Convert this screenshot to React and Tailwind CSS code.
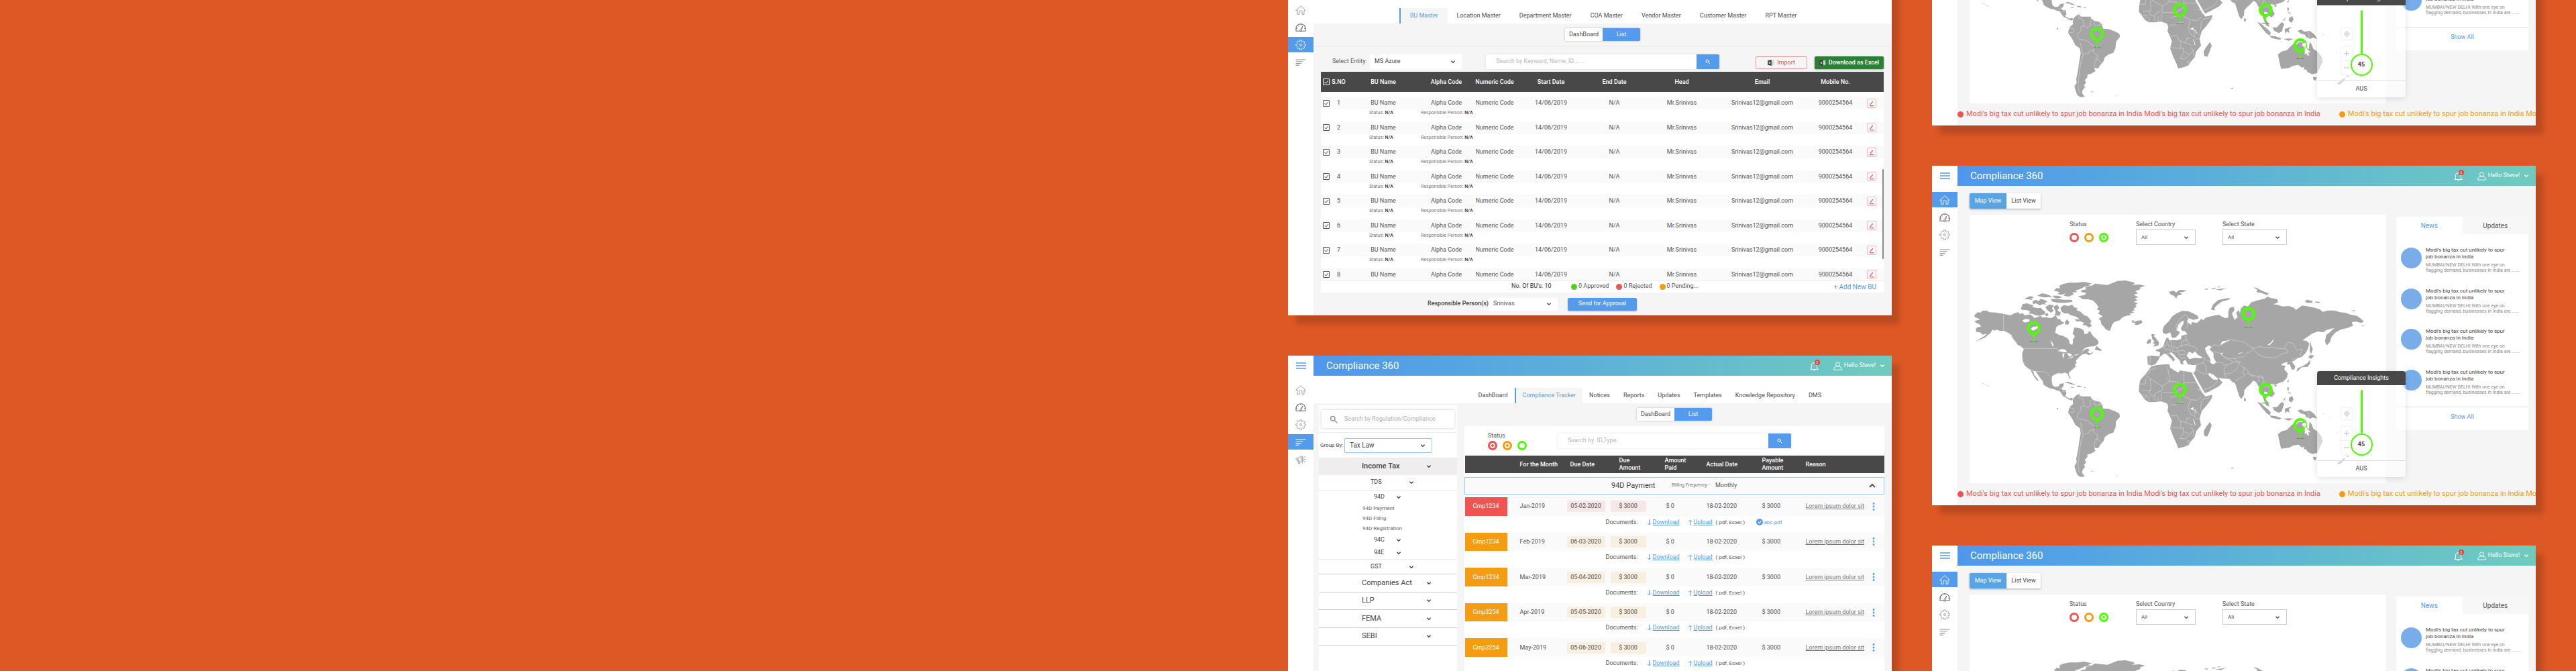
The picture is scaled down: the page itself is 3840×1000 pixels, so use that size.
import React, { useId } from "react";

/* ---------- icons ---------- */

function HomeIcon() {
  return (
    <svg viewBox="0 0 24 24" className="size-4" fill="none" stroke="currentColor" strokeWidth="1.3" strokeLinejoin="round" strokeLinecap="round" aria-hidden="true">
      <path d="M1.5 12.500 12 2.500 22.500 12.500h-3v9h-4.500v-7q0-1-1-1h-4q-1 0-1 1v7H4.500v-9z" />
    </svg>
  );
}

function GaugeIcon() {
  return (
    <svg viewBox="0 0 24 24" className="size-4" fill="none" stroke="currentColor" strokeWidth="1.6" strokeLinejoin="round" strokeLinecap="round" aria-hidden="true">
      <path d="M1.500 20v-5.500a10.500 10.500 0 0 1 21 0V20z" />
      <path d="M10 18.500a2 2 0 1 0 3.500-.5L16 9.500zM12 4.500v2M5 7.500l1.500 1.500M2 14h2M22 14h-2" strokeWidth="1.200" />
    </svg>
  );
}

function GearIcon() {
  return (
    <svg viewBox="0 0 24 24" className="size-4" fill="none" stroke="currentColor" strokeWidth="1.200" strokeLinejoin="round" aria-hidden="true">
      <path d="M9.700 4.500 10 1.500h4l.3 3 1.800.8 2.400-1.900 2.500 2.500-1.900 2.400.8 1.800 3 .3v3.200l-3 .3-.8 1.900 1.900 2.300-2.500 2.600-2.400-1.900-1.800.8-.3 3h-4l-.3-3-1.800-.8-2.400 1.900L3 18.100l1.900-2.300-.8-1.900-3-.3v-3.200l3-.3.8-1.800L3 5.900l2.500-2.500 2.400 1.900z" />
      <circle cx="12" cy="12" r="2.300" />
    </svg>
  );
}

function SortIcon() {
  return (
    <svg viewBox="0 0 24 24" className="size-4" fill="none" stroke="currentColor" strokeWidth="1.700" strokeLinecap="round" aria-hidden="true">
      <path d="M1.500 6h21M1.500 10.200h15M1.500 14.400h11M1.500 18.600h6" />
    </svg>
  );
}

function MegaphoneIcon() {
  return (
    <svg viewBox="0 0 24 24" className="size-4" fill="none" stroke="currentColor" strokeWidth="1.300" strokeLinecap="round" strokeLinejoin="round" aria-hidden="true">
      <path d="M5 8.500H3a1.500 1.500 0 0 0-1.500 1.500v2A1.500 1.500 0 0 0 3 13.500h3zM6 8.500l7-4v14l-7-4M5.500 14l1.500 7h3l-1.500-6" />
      <path d="M15.500 4v16M17 9l5-4M17.500 11.500H23M17 14l5 4" />
    </svg>
  );
}

function SearchIcon({ className }) {
  return (
    <svg viewBox="0 0 24 24" className={className} fill="none" stroke="currentColor" strokeWidth="3" strokeLinecap="round" aria-hidden="true">
      <circle cx="9.500" cy="9.500" r="6.500" />
      <path d="m15 15 7 7" />
    </svg>
  );
}

function Chevron({ className = "size-2" }) {
  return (
    <svg viewBox="0 0 12 12" className={className} fill="none" stroke="currentColor" strokeWidth="2" aria-hidden="true">
      <path d="m2 4 4 4 4-4" />
    </svg>
  );
}

function Arrow({ up }) {
  return (
    <svg viewBox="0 0 8 10" className="mr-[2px] h-[9px] w-[7px]" fill="none" stroke="currentColor" strokeWidth="1.100" aria-hidden="true">
      {up ? <path d="M4 10V1M1 4l3-3 3 3" /> : <path d="M4 0v9M1 6l3 3 3-3" />}
    </svg>
  );
}

function ExcelIcon({ className }) {
  return (
    <svg viewBox="0 0 24 22" className={className} aria-hidden="true">
      <path d="M13 3h9v16h-9z" fill="#fff" stroke="#999" />
      <path d="M14 7h8M14 11h8M14 15h8M18 4v15" stroke="#999" strokeWidth="1" />
      <path d="M0 3 14 0v22L0 19z" fill="#3d3d3d" />
      <path d="m4 7 6 8M10 7l-6 8" stroke="#fff" strokeWidth="2" />
    </svg>
  );
}

function PencilIcon() {
  return (
    <svg viewBox="0 0 12 12" className="size-[10px]" aria-hidden="true">
      <path d="M2 10.500h8" stroke="#f05451" strokeWidth="1.400" />
      <path d="M3.200 8.200 8.300 2.500" stroke="#f05451" strokeWidth="1.600" />
    </svg>
  );
}

/* ---------- frame ---------- */

const NAV = [
  ["home", "Home", HomeIcon],
  ["gauge", "Performance", GaugeIcon],
  ["gear", "Settings", GearIcon],
  ["sort", "Tracker", SortIcon],
  ["news", "Announcements", MegaphoneIcon],
];

function Sidebar({ active, count }) {
  return (
    <nav className="w-[38px] shrink-0 bg-white" aria-label="Main">
      <button type="button" aria-label="Menu" className="flex h-[30px] w-full items-center justify-center text-[#549bed]">
        <svg viewBox="0 0 15 10" className="h-[10px] w-[15px]" stroke="currentColor" strokeWidth="1.500" aria-hidden="true">
          <path d="M0 1h15M0 5h15M0 9h15" />
        </svg>
      </button>
      <ul className="mt-[9px] flex flex-col gap-[3px]">
        {NAV.slice(0, count).map(([id, label, Icon]) => (
          <li key={id}>
            <a
              href="#"
              aria-label={label}
              className={
                id === active
                  ? "flex h-[23px] items-center justify-center bg-[#549bed] text-white"
                  : id === "gauge"
                    ? "flex h-[23px] items-center justify-center text-[#666]"
                    : "flex h-[23px] items-center justify-center text-[#929292]"
              }
            >
              <Icon />
            </a>
          </li>
        ))}
      </ul>
    </nav>
  );
}

function Screen({ active, count = 4, children }) {
  return (
    <section className="flex h-[506px] shrink-0 bg-[#f5f5f5] shadow-[11px_13px_8px_rgba(0,0,0,0.16)]">
      <Sidebar active={active} count={count} />
      <div className="flex min-w-0 flex-1 flex-col">
        <header className="flex h-[30px] shrink-0 items-center bg-linear-to-r from-[#4f97ec] to-[#70cbbd] pr-[10px] pl-[19px] text-white">
          <h1 className="flex-1 text-[15px]">Compliance 360</h1>
          <button type="button" aria-label="Notifications, 2 new" className="relative mr-[21px]">
            <svg viewBox="0 0 24 24" className="size-[15px]" fill="none" stroke="currentColor" strokeWidth="1.700" strokeLinejoin="round" aria-hidden="true">
              <path d="M3 20h18l-2.500-3V11a6.500 6.500 0 0 0-13 0v6zM10 22.500h4M12 4.500V2.500" />
            </svg>
            <span className="absolute -top-[2px] -right-[1px] flex h-2 w-2 items-center justify-center rounded-full bg-[#e8403a] text-[6px] leading-none">2</span>
          </button>
          <button type="button" className="flex items-center text-[9px]">
            <svg viewBox="0 0 24 24" className="mr-[3px] size-[13px]" fill="none" stroke="currentColor" strokeWidth="1.700" aria-hidden="true">
              <circle cx="12" cy="7" r="5.500" />
              <path d="M1.500 22.500v-3q0-4.500 6-6.500h9q6 2 6 6.500v3z" />
            </svg>
            Hello Steve!
            <Chevron className="ml-[6px] size-2" />
          </button>
        </header>
        {children}
      </div>
    </section>
  );
}

function TopTabs({ tabs, active, wide }) {
  return (
    <nav className={wide ? "flex h-[41px] shrink-0 items-end justify-center bg-white" : "flex h-[41px] shrink-0 items-end justify-end bg-white pr-[95px]"} aria-label="Sections">
      {tabs.map((tab) => (
        <a
          key={tab}
          href="#"
          className={
            (wide ? "px-[14px] " : "px-[10px] ") +
            (tab === active
              ? "flex h-[23px] items-center border-l-2 border-[#549bed] bg-[#f5f5f5] text-[9px] text-[#549bed]"
              : "flex h-[23px] items-center text-[9px] text-[#4a4a4a]")
          }
        >
          {tab}
        </a>
      ))}
    </nav>
  );
}

function Toggle() {
  return (
    <div className="flex h-[19px] w-28 rounded-xs text-[9px] shadow-[0_0_3px_rgba(0,0,0,0.25)]">
      <button type="button" className="flex-1 rounded-l-xs bg-white text-[#4a4a4a]">DashBoard</button>
      <button type="button" className="flex-1 rounded-r-xs bg-[#549bed] text-white">List</button>
    </div>
  );
}

function Select({ id, value, box }) {
  return (
    <div className={"relative flex items-center " + box}>
      <select id={id} defaultValue={value} className="h-full w-full appearance-none bg-transparent px-[7px] outline-none">
        <option>{value}</option>
      </select>
      <span className="pointer-events-none absolute right-[9px]">
        <Chevron />
      </span>
    </div>
  );
}

function SearchBar({ placeholder }) {
  return (
    <form className="flex h-[22px] w-[348px] shadow-[0_0_3px_rgba(0,0,0,0.12)]">
      <input type="search" aria-label={placeholder} placeholder={placeholder} className="min-w-0 flex-1 bg-white px-[15px] text-[9px] placeholder:text-[#b8b8b8]" />
      <button type="button" aria-label="Search" className="flex w-[34px] items-center justify-center rounded-r-xs bg-[#549bed] text-white">
        <SearchIcon className="size-2" />
      </button>
    </form>
  );
}

function StatusDots({ checked }) {
  const base = "size-[14px] appearance-none rounded-full border-[3px] bg-white checked:shadow-[inset_0_0_0_2px_white] ";
  const tones = [
    ["Overdue", "border-[#f05451] checked:bg-[#f05451]"],
    ["Pending", "border-[#f49c12] checked:bg-[#f49c12]"],
    ["On track", "border-[#4cff00] checked:bg-[#4cff00]"],
  ];
  return (
    <div className="flex gap-2">
      {tones.map(([label, tone], i) => (
        <input key={label} type="checkbox" aria-label={label} defaultChecked={checked[i]} className={base + tone} />
      ))}
    </div>
  );
}

/* ---------- BU master ---------- */

function Tick({ label, light }) {
  return (
    <label className={light ? "relative ml-[3px] flex size-[10px] text-white" : "relative ml-[3px] flex size-[10px] text-[#555]"}>
      <input type="checkbox" defaultChecked aria-label={label} className="size-[10px] appearance-none rounded-[1px] border border-current" />
      <svg viewBox="0 0 10 10" className="pointer-events-none absolute inset-0" fill="none" stroke="currentColor" strokeWidth="1" aria-hidden="true">
        <path d="m2.500 5 2 2.200L8 3" />
      </svg>
    </label>
  );
}

const BU_COLS = ["w-[16px]", "w-[21px]", "w-[112px]", "w-[76px]", "w-[68px]", "w-[100px]", "w-[89px]", "w-[112px]", "w-[128px]", "w-[90px]", "w-[27px]"];
const BU_HEADS = ["BU Name", "Alpha Code", "Numeric Code", "Start Date", "End Date", "Head", "Email", "Mobile No."];
const BU_CELLS = ["BU Name", "Alpha Code", "Numeric Code", "14/06/2019", "N/A", "Mr.Srinivas", "Srinivas12@gmail.com", "9000254564"];

function BuMaster() {
  const entity = useId();
  const person = useId();
  return (
    <Screen active="gear">
      <TopTabs wide active="BU Master" tabs={["BU Master", "Location Master", "Department Master", "COA Master", "Vendor Master", "Customer Master", "RPT Master"]} />
      <div className="flex h-[35px] shrink-0 items-center justify-center border-b-2 border-[#efefef]">
        <Toggle />
      </div>
      <div className="flex h-[37px] shrink-0 items-center pt-[7px] pr-3 pl-[28px] text-[9px] text-[#555]">
        <label htmlFor={entity} className="w-[56px]">Select Entity:</label>
        <Select id={entity} value="MS Azure" box="h-[22px] w-[137px] rounded-xs bg-white text-[#444]" />
        <div className="ml-[36px] flex-1">
          <SearchBar placeholder="Search by Keyword, Name, ID......." />
        </div>
        <button type="button" className="mt-[3px] flex h-[19px] w-[77px] items-center justify-center gap-1 rounded-xs border border-[#e59a98] text-[9px] text-[#e2504d]">
          <ExcelIcon className="h-[9px] w-[10px]" />
          Import
        </button>
        <button type="button" className="mt-[3px] ml-[11px] flex h-[19px] w-[103px] items-center justify-center gap-1 rounded-xs bg-[#2c7f35] text-[9px] font-medium text-white shadow-[0_1px_3px_rgba(0,0,0,0.3)]">
          <ExcelIcon className="h-[9px] w-[10px]" />
          Download as Excel
        </button>
      </div>
      <div className="mr-3 ml-[11px] flex h-[329px] shrink-0 flex-col bg-white">
        <div className="relative h-[310px] shrink-0 overflow-hidden">
          <table className="h-[312px] w-full table-fixed border-collapse text-center text-[9px] leading-[11px] text-[#555]">
            <colgroup>
              {BU_COLS.map((c, i) => (
                <col key={i} className={c} />
              ))}
            </colgroup>
            <thead>
              <tr className="h-[30px] bg-[#484848] text-white">
                <th className="p-0"><Tick light label="Select all" /></th>
                <th className="p-0 font-medium whitespace-nowrap">S.NO</th>
                {BU_HEADS.map((h) => (
                  <th key={h} className="p-0 font-medium">{h}</th>
                ))}
                <th className="p-0" aria-label="Edit" />
              </tr>
            </thead>
            <tbody>
              <tr className="h-[7px]"><td colSpan={11} /></tr>
              {[1, 2, 3, 4, 5, 6, 7, 8].map((n) => (
                <React.Fragment key={n}>
                  <tr className="h-[19px] bg-[#fafafa]">
                    <td className="p-0"><Tick label={"Select row " + n} /></td>
                    <td className="p-0">{n}</td>
                    {BU_CELLS.map((c) => (
                      <td key={c} className="p-0">{c}</td>
                    ))}
                    <td className="p-0">
                      <button type="button" aria-label={"Edit row " + n} className="ml-[2px] flex size-[14px] items-center justify-center rounded-xs border border-[#f6bcbb]">
                        <PencilIcon />
                      </button>
                    </td>
                  </tr>
                  {n < 8 && (
                    <tr className="h-[17px] text-left align-top text-[7px] text-[#777]">
                      <td colSpan={2} />
                      <td className="p-0 pl-[35px]">Status: <b className="font-medium text-[#333]">N/A</b></td>
                      <td colSpan={8} className="p-0">Responsible Person: <b className="font-medium text-[#333]">N/A</b></td>
                    </tr>
                  )}
                </React.Fragment>
              ))}
            </tbody>
          </table>
          <span className="absolute top-[145px] right-0 h-[134px] w-[2px] rounded-full bg-[#8a8a8a]" />
        </div>
        <div className="flex flex-1 items-center border-t border-[#e8e8e8] pr-[11px] pl-[284px] text-[9px] text-[#555]">
          <span className="w-[89px] text-[#333]">No. Of BU's: 10</span>
          <span className="flex flex-1 items-center gap-[11px]">
            <span className="flex items-center gap-[2px]"><i className="size-[9px] rounded-full bg-[#56cf1c]" />0 Approved</span>
            <span className="flex items-center gap-[2px]"><i className="size-[9px] rounded-full bg-[#f05451]" />0 Rejected</span>
            <span className="flex items-center gap-[2px]"><i className="size-[9px] rounded-full bg-[#f49c12]" />0 Pending...</span>
          </span>
          <a href="#" className="text-[10px] text-[#549bed]">+ Add New BU</a>
        </div>
      </div>
      <div className="flex flex-1 items-center pl-[170px] text-[9px]">
        <label htmlFor={person} className="w-[91px] font-medium whitespace-nowrap text-[#444]">Responsible Person(s):</label>
        <Select id={person} value="Srinivas" box="h-[19px] w-[103px] rounded-xs bg-white text-[#555]" />
        <button type="button" className="ml-[15px] h-[19px] w-[103px] rounded-xs bg-[#549bed] text-white shadow-[0_1px_2px_rgba(0,0,0,0.25)]">Send for Approval</button>
      </div>
    </Screen>
  );
}

/* ---------- compliance tracker ---------- */

function TreeItem({ label, box }) {
  return (
    <button type="button" className={"flex items-center " + box}>
      <span className="flex-1 text-left">{label}</span>
      <Chevron />
    </button>
  );
}

const TRACK_COLS = ["w-[63px]", "w-[87px]", "w-[63px]", "w-[67px]", "w-[71px]", "w-[82px]", "w-[66px]", "w-[99px]", "w-[27px]"];
const TRACK_ROWS = [
  ["Cmp1234", "Jan-2019", "05-02-2020"],
  ["Cmp1234", "Feb-2019", "06-03-2020"],
  ["Cmp1234", "Mar-2019", "05-04-2020"],
  ["Cmp3254", "Apr-2019", "05-05-2020"],
  ["Cmp3254", "May-2019", "05-06-2020"],
];

function Tracker() {
  const group = useId();
  return (
    <Screen active="sort" count={5}>
      <TopTabs active="Compliance Tracker" tabs={["DashBoard", "Compliance Tracker", "Notices", "Reports", "Updates", "Templates", "Knowledge Repository", "DMS"]} />
      <div className="flex min-h-0 flex-1 pr-[11px] pl-2">
        <aside className="mt-[3px] w-[206px] shrink-0 bg-white text-[#444]">
          <label className="mx-[4px] mt-[7px] flex h-[27px] items-center rounded-xs pl-3 text-[#999] shadow-[0_0_4px_rgba(0,0,0,0.2)]">
            <SearchIcon className="size-3" />
            <input type="search" aria-label="Search by Regulation/Compliance" placeholder="Search by Regulation/Compliance" className="ml-[10px] min-w-0 flex-1 text-[9px] placeholder:text-[#b0b0b0]" />
          </label>
          <div className="mt-[6px] flex h-[38px] items-center border-t border-[#eee] pl-[2px] text-[9px]">
            <label htmlFor={group} className="w-[36px] text-[8px] whitespace-nowrap">Group By:</label>
            <Select id={group} value="Tax Law" box="h-[22px] w-[131px] rounded-xs border border-[#9cc6f5] text-[10px]" />
          </div>
          <TreeItem label="Income Tax" box="h-[26px] w-full bg-[#efedee] pr-[38px] pl-[64px] text-[11px] font-medium" />
          <TreeItem label="TDS" box="h-[23px] w-full border-b border-[#e8e8e8] pr-[64px] pl-[77px] text-[9px]" />
          <TreeItem label="94D" box="h-[19px] w-full pr-[83px] pl-[82px] text-[9px]" />
          <ul className="pl-[65px] text-[8px] leading-[15px] text-[#666]">
            <li>94D Payment</li>
            <li>94D Filing</li>
            <li>94D Registration</li>
          </ul>
          <TreeItem label="94C" box="h-[19px] w-full pr-[83px] pl-[82px] text-[9px]" />
          <TreeItem label="94E" box="h-[19px] w-full pr-[83px] pl-[82px] text-[9px]" />
          <TreeItem label="GST" box="h-[23px] w-full border-t border-b border-t-[#e8e8e8] border-b-[#ccc] pr-[64px] pl-[77px] text-[9px]" />
          <div className="grid h-[106px] grid-rows-4 text-[11px]">
            {["Companies Act", "LLP", "FEMA", "SEBI"].map((t) => (
              <TreeItem key={t} label={t} box="w-full border-b border-[#ccc] pr-[38px] pl-[64px]" />
            ))}
          </div>
        </aside>
        <main className="ml-[11px] flex min-w-0 flex-1 flex-col">
          <div className="flex h-[34px] shrink-0 items-center justify-center pb-[1px]">
            <Toggle />
          </div>
          <div className="flex-1 bg-white">
            <div className="flex h-[44px] items-center pl-[35px] text-[9px] text-[#555]">
              <fieldset className="w-[104px]">
                <legend className="mb-[2px] text-[9px] leading-[12px]">Status</legend>
                <StatusDots checked={[true, true, false]} />
              </fieldset>
              <SearchBar placeholder="Search by  ID,Type" />
            </div>
            <table className="h-[325px] w-full table-fixed border-collapse text-left text-[9px] leading-[11px] text-[#555]">
              <colgroup>
                {TRACK_COLS.map((c, i) => (
                  <col key={i} className={c} />
                ))}
              </colgroup>
              <thead>
                <tr className="h-[26px] bg-[#484848] text-white">
                  <th className="p-0" aria-label="Id" />
                  <th className="p-0 pl-[19px] font-medium">For the Month</th>
                  <th className="p-0 pl-[7px] font-medium">Due Date</th>
                  <th className="p-0 pl-[17px] font-medium">Due<br />Amount</th>
                  <th className="p-0 pl-[18px] font-medium">Amount<br />Paid</th>
                  <th className="p-0 pl-[9px] font-medium">Actual Date</th>
                  <th className="p-0 pl-[10px] font-medium">Payable<br />Amount</th>
                  <th className="p-0 pl-[9px] font-medium">Reason</th>
                  <th className="p-0" aria-label="More" />
                </tr>
              </thead>
              <tbody>
                <tr className="h-[6px]"><td colSpan={9} /></tr>
                <tr className="h-[25px]">
                  <td colSpan={9} className="rounded-xs border border-[#9cc6f5] bg-[#fafafa] p-0">
                    <button type="button" className="flex w-full items-center pr-[11px] pl-[218px] text-left">
                      <span className="w-[90px] text-[11px] text-[#444]">94D Payment</span>
                      <span className="w-[65px] text-[7px] whitespace-nowrap text-[#777]">Billing Frequency -</span>
                      <span className="flex-1">Monthly</span>
                      <span className="rotate-180"><Chevron className="size-3" /></span>
                    </button>
                  </td>
                </tr>
                <tr className="h-[5px]"><td colSpan={9} /></tr>
                {TRACK_ROWS.map(([id, month, due], i) => (
                  <React.Fragment key={month}>
                    <tr className="h-[27px] bg-[#fafafa]">
                      <td className={i === 0 ? "bg-[#f05451] p-0 text-center text-white" : "bg-[#f49c12] p-0 text-center text-white"}>{id}</td>
                      <td className="p-0 pl-[19px]">{month}</td>
                      <td className="p-0 pl-[2px]">
                        <span className={i === 0 ? "block w-[57px] rounded-xs bg-[#f9e6e6] py-[3px] text-center" : "block w-[57px] rounded-xs bg-[#f9efe0] py-[3px] text-center"}>{due}</span>
                      </td>
                      <td className="p-0 pl-[4px]">
                        <span className={i === 0 ? "block w-[53px] rounded-xs bg-[#f9e6e6] py-[3px] text-center" : "block w-[53px] rounded-xs bg-[#f9efe0] py-[3px] text-center"}>$ 3000</span>
                      </td>
                      <td className="p-0 pl-[20px]">$ 0</td>
                      <td className="p-0 pl-[9px]">18-02-2020</td>
                      <td className="p-0 pl-[10px]">$ 3000</td>
                      <td className="p-0 pl-[9px]"><a href="#" className="text-[#777] underline">Lorem ipsum dolor sit</a></td>
                      <td className="p-0">
                        <button type="button" aria-label={"More for " + month} className="ml-[9px] block text-[#549bed]">
                          <svg viewBox="0 0 4 12" className="h-3 w-1" fill="currentColor" aria-hidden="true">
                            <circle cx="2" cy="1.500" r="1.400" /><circle cx="2" cy="6" r="1.400" /><circle cx="2" cy="10.500" r="1.400" />
                          </svg>
                        </button>
                      </td>
                    </tr>
                    <tr className="h-[25px] align-top">
                      <td colSpan={9} className="p-0 pt-[4px]">
                        <div className="flex items-center pl-[210px]">
                          <span className="w-[61px]">Documents:</span>
                          <a href="#" className="flex w-[61px] items-center text-[#549bed]"><Arrow /><span className="underline">Download</span></a>
                          <a href="#" className="flex w-[42px] items-center text-[#549bed]"><Arrow up /><span className="underline">Upload</span></a>
                          <span className="w-[60px] text-[8px]">( pdf, Ecxel )</span>
                          {i === 0 && (
                            <a href="#" className="flex items-center gap-[2px] text-[8px] text-[#549bed]">
                              <svg viewBox="0 0 10 10" className="size-[10px]" aria-hidden="true">
                                <circle cx="5" cy="5" r="5" fill="currentColor" />
                                <path d="m2.800 5 1.700 1.700 3-3.200" fill="none" stroke="#fff" strokeWidth="1.200" />
                              </svg>
                              abc.pdf
                            </a>
                          )}
                        </div>
                      </td>
                    </tr>
                  </React.Fragment>
                ))}
              </tbody>
            </table>
          </div>
        </main>
      </div>
    </Screen>
  );
}

/* ---------- map ---------- */

function Pin({ x, y }) {
  return (
    <g transform={`translate(${x} ${y})`}>
      <ellipse cx="0" cy="60" rx="19" ry="2" fill="#777" />
      <path d="M-12 26 L0 40 L12 26z" fill="#4cff00" />
      <path d="M0 30V56M-4 59L0 54L4 59z" stroke="#4cff00" strokeWidth="3" fill="#4cff00" />
      <circle r="25" fill="none" stroke="#4cff00" strokeWidth="12" />
    </g>
  );
}

function WorldMap() {
  return (
    <svg viewBox="3 0 1863 930" className="block w-full" role="img" aria-label="World map with office locations">
      <g fill="#a6a6a6">
        <path d="M25 178L40 166 52 168 60 160 78 158 92 166 120 167 155 173 185 180 205 170 222 166 226 174 240 170 250 180 262 178 275 176 286 184 292 192 305 188 320 182 330 190 345 188 362 192 375 190 385 180 392 186 398 198 408 196 412 206 428 212 412 222 400 224 390 234 386 258 404 268 422 272 440 282 448 292 450 306 462 312 466 300 464 290 474 274 464 262 468 248 472 234 490 236 504 240 514 248 516 264 530 262 540 248 550 264 558 276 570 284 580 296 578 308 562 318 534 320 516 328 504 342 518 332 534 328 538 336 530 344 544 350 556 344 552 352 536 358 524 352 508 354 496 364 486 374 478 382 482 392 474 400 478 408 466 420 450 432 446 442 456 464 450 462 442 442 430 436 414 440 400 438 384 444 372 452 370 472 374 492 386 500 400 498 408 486 426 484 420 500 412 506 420 514 434 514 436 532 430 540 440 546 450 552 458 548 468 552 460 560 446 556 436 548 424 544 414 530 406 518 394 516 380 510 362 506 346 498 334 490 330 474 318 458 306 440 298 430 280 426 264 416 250 404 240 382 238 350 246 330 232 318 218 312 208 296 196 282 190 268 172 256 155 248 140 250 124 244 116 248 106 244 96 260 84 268 74 278 56 286 26 298 50 284 70 272 80 262 62 266 50 256 34 254 30 244 36 234 54 230 50 222 34 214 24 206 36 202 50 200 38 192 26 188z" />
        <path d="M276 426L288 430 292 446 306 462 312 474 306 472 294 458 286 444z" />
        <path d="M232 152L240 130 260 126 276 132 288 134 284 142 304 148 322 146 330 156 342 164 338 176 326 178 318 182 300 180 286 174 268 172 274 162 256 156 244 156z" />
        <path d="M248 108L262 98 276 94 292 100 278 104 286 112 266 108zM284 118L300 110 312 116 320 106 336 110 352 118 338 126 348 132 330 130 318 136 300 126 288 130zM306 92L326 82 344 84 364 92 372 100 356 98 336 100 320 96zM366 108L392 106 424 110 460 110 462 120 430 124 396 124 372 118zM342 142L360 132 378 134 372 150 380 160 366 168 350 156zM378 140L396 132 404 146 396 158 412 168 404 182 384 180 388 164z" />
        <path d="M380 70L392 58 408 60 404 48 420 40 450 34 484 34 516 30 552 38 532 44 548 48 518 52 498 62 474 70 486 76 462 78 470 86 446 96 424 92 432 82 414 88 396 84 406 76z" />
        <path d="M374 92L400 92 418 100 396 104 380 100zM410 146L424 134 446 138 462 132 470 144 486 148 480 156 500 164 516 180 530 184 548 206 542 216 550 228 534 234 526 226 508 222 516 214 498 206 482 208 474 198 496 198 480 186 458 180 440 170 426 172 412 160zM430 208L440 198 448 210 446 220 432 222zM340 174L350 168 356 180 346 184z" />
        <path d="M488 94L516 90 526 80 504 76 500 68 524 64 522 54 548 48 564 38 596 42 620 44 650 32 664 26 700 24 736 32 742 38 728 44 762 42 788 48 764 56 768 62 744 72 756 82 736 88 758 98 742 104 754 112 738 120 756 126 744 134 750 142 736 150 742 158 726 160 740 168 718 172 726 178 698 184 686 190 674 202 650 210 640 222 636 236 630 250 614 244 604 232 592 218 590 204 580 196 598 184 578 172 586 160 572 152 580 144 570 128 556 114 534 108 510 108z" />
        <path d="M726 204L740 202 736 210 752 204 772 202 776 212 758 222 740 222 746 214 732 212z" />
        <path d="M562 334L572 316 578 324 592 332 592 340 578 336z" />
        <path d="M428 482L444 476 462 484 478 492 462 490 446 484zM480 494L496 494 508 500 488 500zM456 500h12v3h-12zM514 500h8v3h-8z" />
        <path d="M446 604L452 588 466 576 464 560 470 548 480 538 494 532 500 542 516 542 544 542 548 552 562 562 586 566 596 580 600 596 624 598 652 608 672 618 676 632 658 654 656 680 646 704 624 712 608 724 602 742 588 758 578 774 560 772 566 786 546 798 530 802 530 814 518 826 524 838 514 850 520 856 508 872 506 884 516 898 498 902 486 894 480 882 472 854 482 838 480 822 488 782 494 740 500 706 496 684 476 670 464 646 452 626 444 616z" />
        <path d="M484 884L500 888 520 900 504 902zM544 878l4-3 2 5zM552 877l6 0-3 4zM658 894l8 4-6 0zM80 492l6 2-3 4zM62 482h3v3h-3zM70 486h4v2h-4zM393 594h6v5h-6z" />
        <path d="M794 300L806 286 816 288 812 304 798 308zM816 264L830 264 828 274 836 282 850 300 848 314 824 320 832 308 822 304 830 296 820 286z" />
      </g>
      <g transform="translate(870 0)" fill="#a6a6a6">
        <path d="M-70 400L-72 362 -50 360 -18 364 -14 346 -38 336 -14 328 0 318 6 298 14 280 24 284 24 292 44 290 60 292 78 286 82 270 108 264 94 250 106 240 110 212 124 222 128 210 150 214 164 202 170 194 176 202 190 190 214 184 230 180 248 178 262 186 276 192 290 190 290 164 296 146 314 142 318 156 306 172 318 200 332 188 326 168 336 156 342 170 346 150 360 136 378 140 392 122 424 112 452 106 466 96 480 102 510 108 512 122 492 130 514 134 534 140 562 138 586 148 592 156 606 146 620 136 650 140 678 146 700 154 712 164 736 158 764 158 790 166 812 168 840 178 866 182 884 196 896 208 884 214 862 208 842 210 848 226 824 236 796 242 770 256 752 276 744 300 730 314 722 296 728 268 744 256 764 236 740 242 728 246 714 256 690 252 664 262 644 276 622 292 640 294 652 306 646 330 634 350 618 366 598 372 586 382 574 388 590 408 584 424 572 420 566 400 552 400 556 388 536 394 524 402 546 406 540 420 556 440 552 460 536 476 514 484 496 490 482 486 472 498 488 512 498 530 484 546 474 540 464 524 452 520 448 538 458 556 466 566 474 588 460 582 450 560 440 532 436 508 424 496 414 478 402 472 390 486 372 502 362 514 360 536 348 554 338 540 328 506 320 482 308 478 296 464 262 462 238 458 222 444 206 438 200 442 214 458 232 468 246 460 264 480 250 496 228 508 206 520 180 530 172 508 156 480 142 452 132 440 142 428 146 402 128 402 108 398 100 380 92 382 86 390 92 400 78 398 72 380 60 370 46 354 34 344 28 350 44 366 52 378 44 386 36 376 18 358 6 350 -6 358 -16 366 -26 384 -36 398 -54 404z" />
        <path d="M-4 246L2 228 24 206 38 186 60 170 84 160 112 162 134 172 154 182 156 194 134 200 112 192 106 206 112 234 106 248 84 250 78 238 90 216 92 204 82 206 66 222 60 246 74 256 66 268 54 280 38 280 30 256 10 264 -2 258z" />
        <path d="M-54 408L-28 402 -4 400 26 398 30 414 52 428 68 436 72 426 96 430 124 434 134 446 144 472 158 496 166 512 182 534 186 542 220 534 214 554 192 584 172 606 162 640 168 672 146 698 140 724 124 742 112 760 92 768 66 774 58 752 44 722 30 684 38 652 28 628 18 606 22 588 16 574 0 568 -14 564 -36 568 -66 568 -84 556 -96 538 -110 520 -108 490 -104 470 -84 446 -70 430z" />
        <path d="M182 718L180 698 190 680 208 656 216 672 206 700 196 722z" />
        <path d="M212 154L222 132 244 112 272 106 298 102 292 110 262 118 242 132 228 146 230 158zM24 74L48 70 56 78 72 66 104 68 88 76 72 76 84 86 62 92 58 104 46 92 34 88zM180 62L200 60 196 66zM212 58L238 56 226 62zM232 64L252 62 280 58 256 68zM240 52L256 52 248 56zM402 54L418 58 440 70 470 82 464 90 440 80 416 76 420 66zM632 116L644 110 668 116 664 124 640 124zM678 118L702 120 696 125 680 122zM838 158L858 157 852 162zM884 224L902 227 892 229z" />
        <path d="M656 294L662 318 668 330 660 354 654 340zM648 368L656 356 674 360 662 374zM656 378L656 396 644 410 618 412 604 426 594 432 600 416 628 404 646 392zM552 480L560 466 560 476zM494 492L508 490 502 500zM552 502L562 504 558 520 572 532 560 528zM562 548L576 540 582 556 572 570 560 560zM534 560l14 -16 -8 16zM362 546L370 556 366 566 360 560z" />
        <path d="M420 566L436 572 452 588 470 602 480 614 476 628 462 618 444 598zM474 628L500 630 528 640 520 646 484 638zM488 590L508 590 520 576 530 566 540 576 534 592 530 608 516 616 496 606zM542 598L560 592 574 588 560 600 564 616 552 608 546 620zM536 642L560 640 582 642 560 650zM600 606L616 600 630 610 654 606 674 620 688 642 668 636 656 642 638 634 634 624 614 618z" />
        <path d="M512 712L528 698 552 692 572 672 586 660 594 668 604 658 628 656 634 676 650 688 654 654 664 668 670 686 690 700 706 720 712 744 700 768 688 794 666 800 644 790 638 778 628 780 630 768 618 770 604 758 580 762 562 772 526 776 520 750zM668 812L686 814 680 828 672 826z" />
        <path d="M818 806L832 808 822 816zM776 842L806 818 814 818 804 832 790 846zM710 618L720 622 716 624zM736 630L752 642 746 640zM768 698L780 708 774 706zM302 861h10v4h-10z" />
      </g>

      <g fill="#fff">
        <path d="M276 242L286 232 310 228 306 238 288 248zM238 204L252 196 272 198 270 208 250 212zM364 292L372 300 380 316 374 318zM398 340L414 330 432 334 440 346 424 344zM418 352L428 348 424 368 420 370zM438 348L452 350 462 358 450 366zM440 374L466 364 464 370zM470 358L488 352 484 358z" />
        <path d="M974 360L984 342 1000 350 1012 342 1024 356 1042 366 1040 372 1010 370 986 376zM1056 326L1072 314 1086 320 1076 332 1094 348 1094 368 1106 390 1094 400 1080 392 1080 376 1062 348zM1124 352L1134 346 1134 358zM1202 350L1230 344 1210 352zM1336 312L1352 300 1364 284 1360 298 1344 314zM990 596L1006 590 1002 604zM1124 314L1132 296 1170 290 1136 306z" />
        <path d="M1004 644L1012 670M1018 618L1010 600" stroke="#fff" strokeWidth="3" />
      </g>
      <g fill="none" stroke="#fff">
        <path d="M1003 442L1024 482 1052 530" strokeWidth="8" />
        <path d="M1074 444L1094 464 1112 464" strokeWidth="7" />
        <path d="M1076 530L1090 534 1060 540" strokeWidth="3" />
      </g>
      <g fill="none" stroke="#dcdcdc" strokeWidth="1.800" strokeLinejoin="round">
        <path d="M155 173V248L192 276 214 306M246 328H388L404 334M462 362L500 350 530 322M298 430L326 432 344 434 368 458M404 512L412 500M418 522L436 518" />
        <path d="M494 534L490 548 512 556 514 584 530 592 546 580 540 564 552 556M560 564L562 582 596 580M584 566V582M514 584L500 590 502 606 486 620 484 636 500 646 508 644M450 592L468 598 470 612 448 614M508 644L530 652 556 672 560 690 540 696 534 708 512 710 504 690 500 660M560 690L556 702 576 716 574 732 564 736M512 710L502 742 494 790 488 850 494 884M574 732L562 750 562 768M574 732L592 748" />
        <path d="M784 446L806 440 812 424 838 416 M784 446L864 496 900 474 888 410M812 464L814 516 776 518M762 488L790 486 790 462M864 496V516L838 526 828 540 814 538 806 524 812 516M806 544V566M830 540L832 566M846 540V568M860 526V560M864 524H930M884 460L896 476M776 534L800 540M786 550L796 542" />
        <path d="M962 430V482H1016M962 482V500L930 520 930 540 900 548M962 500L970 520 958 540 990 556 1020 560 1040 544M900 474L930 478 962 490M1020 512L1030 510 1050 536M1044 556L1058 552 1080 546M1040 560L1036 600 M990 560L980 590 990 620 1010 634 M900 580H924L930 570 960 568M904 630L930 626 940 650 970 660 974 640 990 640M900 682L946 684 962 684 M948 650V684M970 660L1000 670M960 684L958 710 944 730 M962 700L990 712 1004 690 990 680M944 730L968 732 984 714M1004 690L1004 720M1014 640L1034 644M1010 634L1004 600 1034 626M976 744l8 -6 6 8 -8 6z" />
        <path d="M800 364L812 366 808 398M852 362L868 366M884 336L868 326 880 318M876 320L884 306M880 330L900 332 900 350 884 352M886 294L894 320 914 328M906 292L908 318 930 324 950 318 952 296M914 328L910 340 932 344M930 324L934 340 960 336 972 350M934 340L940 356 966 356M950 318L972 310 1010 322 1022 330 1010 344M952 296L974 290 970 270M940 358L948 372 970 370M974 290L990 314M930 250L926 226 944 196 964 178M964 178L976 182 982 200 974 240" />
        <path d="M1012 402L1048 392 1056 376 1040 366M1048 392L1062 412 1060 430 1074 440M1020 404L1014 420 1044 440 1070 444M1014 420L1006 440M1050 514L1084 500 1100 490 1112 470M1066 382L1082 386M1104 392L1124 388 1150 404 1140 424 1144 442 1150 462M1150 404L1186 388 1212 390 1196 424 1168 440 1144 442M1094 340L1124 350 1150 372 1180 386M1134 362L1160 374 1190 372M1058 340L1080 330 M1086 318L1096 312 1126 314 1164 288 1200 294 1230 298 1262 322 1274 326M1274 326L1258 342 1240 350 1230 364 1190 372 1196 386 1216 386M1216 404L1232 416 1224 440 1236 446 1210 462 1192 472M1224 410L1240 420 1260 444 1286 452 1304 450 1314 460 1290 454M1242 438L1276 456M1290 456L1300 478M1314 450L1318 480 1308 484M1320 470L1336 490 1360 486M1320 500L1334 496 1354 512M1340 520L1356 516" />
        <path d="M1270 328L1300 320 1330 324 1360 322 1384 328 1420 330 1428 344 1400 352 1370 370 1320 366 1290 352zM1408 326L1430 300 1450 306 1466 336 1490 330 1480 366M1440 380L1456 372 1470 378M1520 612V636" />
      </g>

      <Pin x={290} y={237} />
      <Pin x={573} y={620} />
      <Pin x={1250} y={173} />
      <Pin x={943} y={512} />
      <Pin x={1327} y={512} />
      <Pin x={1482} y={670} />
      <circle cx="1500" cy="668" r="9" fill="#fff" />
      <path d="M1502 674v38l8-6 5 12 7-3-5-12h11z" fill="#fff" />
    </svg>
  );
}

function NewsItem() {
  return (
    <li className="flex">
      <span className="mr-[6px] size-[31px] shrink-0 rounded-full bg-[#78ade9]" />
      <div className="min-w-0 whitespace-nowrap">
        <h3 className="-mt-px text-[8px] leading-[10px] text-[#444]">Modi's big tax cut unlikely to spur<br />job bonanza in India</h3>
        <p className="mt-[3px] text-[7px] leading-[8px] text-[#8a8a8a]">MUMBAI/NEW DELHI With one eye on<br />flagging demand, businesses in India are ......</p>
      </div>
    </li>
  );
}

const HEADLINE = "Modi's big tax cut unlikely to spur job bonanza in India Modi's big tax cut unlikely to spur job bonanza in India";

function MapScreen() {
  const country = useId();
  const state = useId();
  return (
    <Screen active="home">
      <div className="flex h-[43px] shrink-0 items-start pt-[11px] pl-[18px] text-[9px]">
        <div className="flex h-[23px] rounded-xs shadow-[0_1px_3px_rgba(0,0,0,0.3)]">
          <button type="button" className="w-[55px] rounded-l-xs bg-[#59a4e4] text-white">Map View</button>
          <button type="button" className="w-[51px] rounded-r-xs bg-white text-[#444]">List View</button>
        </div>
      </div>
      <div className="flex shrink-0 items-start gap-[15px] pr-[11px] pl-[18px]">
        <main className="relative min-w-0 flex-1 rounded-xs bg-white">
          <div className="flex h-[90px] pt-2 pl-[149px] text-[9px] text-[#555]">
            <fieldset className="w-[99px]">
              <legend className="mb-[7px] leading-[12px]">Status</legend>
              <StatusDots checked={[false, false, true]} />
            </fieldset>
            <div className="w-[129px]">
              <label htmlFor={country} className="mb-[2px] block leading-[12px]">Select Country</label>
              <Select id={country} value="All" box="h-[23px] w-[89px] border border-[#ccc] text-[8px]" />
            </div>
            <div>
              <label htmlFor={state} className="mb-[2px] block leading-[12px]">Select State</label>
              <Select id={state} value="All" box="h-[23px] w-[96px] border border-[#ccc] text-[8px]" />
            </div>
          </div>
          <WorldMap />
          <div className="absolute top-[288px] right-[51px] flex w-4 flex-col text-[#666]">
            <button type="button" aria-label="Locate" className="flex h-[17px] items-center justify-center rounded-xs bg-white shadow-[0_0_3px_rgba(0,0,0,0.3)]">
              <svg viewBox="0 0 10 10" className="size-[9px]" fill="none" stroke="currentColor" strokeWidth="0.900" aria-hidden="true">
                <circle cx="5" cy="5" r="3.300" /><path d="M5 0v2M5 8v2M0 5h2M8 5h2" /><circle cx="5" cy="5" r="1" fill="currentColor" />
              </svg>
            </button>
            <div className="mt-[11px] rounded-xs bg-white shadow-[0_0_3px_rgba(0,0,0,0.3)]">
              <button type="button" aria-label="Zoom in" className="flex h-[21px] w-full items-center justify-center border-b border-[#ddd]">
                <svg viewBox="0 0 8 8" className="size-2" stroke="currentColor" aria-hidden="true"><path d="M4 0v8M0 4h8" /></svg>
              </button>
              <button type="button" aria-label="Zoom out" className="flex h-[20px] w-full items-center justify-center">
                <svg viewBox="0 0 8 8" className="size-2" stroke="currentColor" aria-hidden="true"><path d="M0 4h8" /></svg>
              </button>
            </div>
          </div>
          <div className="absolute top-[233px] -right-[29px] z-10 flex h-[158px] w-[132px] flex-col items-center rounded-sm bg-white/55 text-[9px] shadow-[0_2px_10px_rgba(0,0,0,0.12)]">
            <h2 className="flex h-[21px] w-full items-center justify-center rounded-t-sm bg-[#484848] text-white">Compliance Insights</h2>
            <span className="mt-[7px] h-[65px] w-[3px] rounded-full bg-[#4cff00]" />
            <span className="flex size-[33px] shrink-0 items-center justify-center rounded-full border-2 border-[#4cff00] bg-white font-bold text-[#444]">45</span>
            <span className="mt-[7px] flex w-full flex-1 items-center justify-center border-t border-[#ddd] text-[#444]">AUS</span>
          </div>
        </main>
        <aside className="mt-[3px] w-[197px] shrink-0 rounded-xs bg-white">
          <div className="flex h-[26px] text-[10px]">
            <button type="button" className="flex-1 text-[#549bed]">News</button>
            <button type="button" className="flex-1 bg-[#f7f7f7] text-[#555]">Updates</button>
          </div>
          <ul className="grid h-[257px] auto-rows-fr pt-[15px] pl-[7px] [&>li]:pt-[5px]">
            <NewsItem />
            <NewsItem />
            <NewsItem />
            <NewsItem />
          </ul>
          <div className="flex h-[35px] items-center justify-center border-t border-[#ddd] pb-[4px]">
            <a href="#" className="text-[9px] text-[#549bed]">Show All</a>
          </div>
        </aside>
      </div>
      <div className="flex flex-1 items-center gap-[28px] overflow-hidden text-[11px] whitespace-nowrap">
        <p className="flex shrink-0 items-center gap-[4px] text-[#f05451]"><i className="size-[9px] rounded-full bg-[#f05451]" />{HEADLINE}</p>
        <p className="flex shrink-0 items-center gap-[4px] text-[#f49c12]"><i className="size-[9px] rounded-full bg-[#f49c12]" />{HEADLINE}</p>
      </div>
    </Screen>
  );
}

export default function App() {
  return (
    <div className="flex h-screen justify-end gap-15 overflow-hidden bg-[#de5826] pr-15 pl-[50%] font-['Roboto',sans-serif]">
      <div className="flex min-w-0 flex-1 flex-col justify-center gap-15">
        <BuMaster />
        <Tracker />
      </div>
      <div className="flex min-w-0 flex-1 flex-col justify-center gap-15">
        <MapScreen />
        <MapScreen />
        <MapScreen />
      </div>
    </div>
  );
}
